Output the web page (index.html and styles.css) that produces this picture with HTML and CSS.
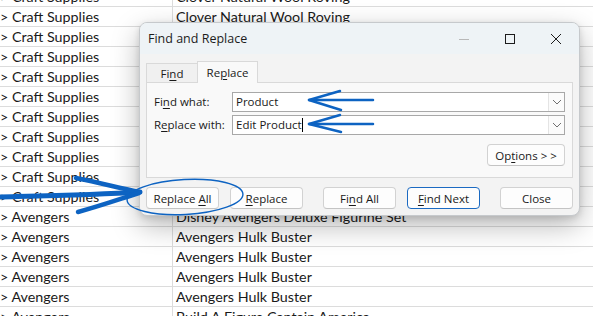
FILE: index.html
```html
<!DOCTYPE html>
<html>
<head>
<meta charset="utf-8">
<link rel="stylesheet" href="styles.css">
</head>
<body>
<div class="sheet">
  <div class="row"><div class="ca">&gt; Craft Supplies</div><div class="cb">Clover Natural Wool Roving</div></div>
  <div class="row"><div class="ca">&gt; Craft Supplies</div><div class="cb">Clover Natural Wool Roving</div></div>
  <div class="row"><div class="ca">&gt; Craft Supplies</div><div class="cb">Clover Natural Wool Roving</div></div>
  <div class="row"><div class="ca">&gt; Craft Supplies</div><div class="cb">Clover Natural Wool Roving</div></div>
  <div class="row"><div class="ca">&gt; Craft Supplies</div><div class="cb">Clover Natural Wool Roving</div></div>
  <div class="row"><div class="ca">&gt; Craft Supplies</div><div class="cb">Clover Natural Wool Roving</div></div>
  <div class="row"><div class="ca">&gt; Craft Supplies</div><div class="cb">Clover Natural Wool Roving</div></div>
  <div class="row"><div class="ca">&gt; Craft Supplies</div><div class="cb">Clover Natural Wool Roving</div></div>
  <div class="row"><div class="ca">&gt; Craft Supplies</div><div class="cb">Clover Natural Wool Roving</div></div>
  <div class="row"><div class="ca">&gt; Craft Supplies</div><div class="cb">Clover Natural Wool Roving</div></div>
  <div class="row"><div class="ca">&gt; Craft Supplies</div><div class="cb">Clover Natural Wool Roving</div></div>
  <div class="row"><div class="ca">&gt; Avengers</div><div class="cb">Disney Avengers Deluxe Figurine Set</div></div>
  <div class="row"><div class="ca">&gt; Avengers</div><div class="cb">Avengers Hulk Buster</div></div>
  <div class="row"><div class="ca">&gt; Avengers</div><div class="cb">Avengers Hulk Buster</div></div>
  <div class="row"><div class="ca">&gt; Avengers</div><div class="cb">Avengers Hulk Buster</div></div>
  <div class="row"><div class="ca">&gt; Avengers</div><div class="cb">Avengers Hulk Buster</div></div>
  <div class="row"><div class="ca">&gt; Avengers</div><div class="cb">Build A Figure Captain America</div></div>
</div>

<div class="dialog">
  <div class="titlebar">
    <span class="title">Find and Replace</span>
    <div class="winbtns">
      <span class="wb"><svg width="12" height="12" viewBox="0 0 12 12"><path d="M1 6.5H11" stroke="#b8b8b8" stroke-width="1"/></svg></span>
      <span class="wb"><svg width="12" height="12" viewBox="0 0 12 12"><rect x="1.5" y="1.5" width="9" height="9" fill="none" stroke="#1c1c1c" stroke-width="1"/></svg></span>
      <span class="wb"><svg width="12" height="12" viewBox="0 0 12 12"><path d="M1 1L11 11M11 1L1 11" stroke="#1c1c1c" stroke-width="1"/></svg></span>
    </div>
  </div>
  <div class="body">
    <div class="tabs">
      <div class="tab">Fi<u>n</u>d</div>
      <div class="tab active">Re<u>p</u>lace</div>
    </div>
    <div class="panel">
      <div class="field">
        <label class="lbl">Fi<u>n</u>d what:</label>
        <div class="combo"><span class="val">Product</span><span class="dd"><svg width="10" height="6" viewBox="0 0 10 6"><path d="M1 1L5 5L9 1" fill="none" stroke="#707070" stroke-width="1"/></svg></span></div>
      </div>
      <div class="field">
        <label class="lbl">R<u>e</u>place with:</label>
        <div class="combo"><span class="val">Edit Product<span class="caret"></span></span><span class="dd"><svg width="10" height="6" viewBox="0 0 10 6"><path d="M1 1L5 5L9 1" fill="none" stroke="#707070" stroke-width="1"/></svg></span></div>
      </div>
      <div class="optrow"><button class="btn opt">Op<u>t</u>ions &gt; &gt;</button></div>
    </div>
    <div class="btnrow">
      <button class="btn">Replace <u>A</u>ll</button>
      <button class="btn"><u>R</u>eplace</button>
      <button class="btn gap">Fi<u>n</u>d All</button>
      <button class="btn primary"><u>F</u>ind Next</button>
      <button class="btn gap">Close</button>
    </div>
  </div>
</div>

<svg class="ann" width="593" height="316" viewBox="0 0 593 316">
  <g fill="none" stroke="#0d63c2" stroke-linecap="round" stroke-linejoin="round">
    <path d="M373 100 C350 100 330 100 309 100" stroke-width="2.5"/>
    <path d="M340 91 L309 100 L341 110" stroke-width="2.5"/>
    <path d="M373 124 C350 124 330 124 309 124" stroke-width="2.5"/>
    <path d="M340 115 L309 124 L341 132" stroke-width="2.5"/>
    <path d="M0 197 C40 196 95 195 140 192" stroke-width="5"/>
    <path d="M76 178 C100 183 120 188 139 192" stroke-width="4.5"/>
    <path d="M78 212 C100 206 120 199 139 193" stroke-width="4.5"/>
    <ellipse cx="185" cy="197" rx="58" ry="17.5" stroke-width="1.4" transform="rotate(-3 185 197)"/>
  </g>
</svg>
</body>
</html>
```

FILE: styles.css
```css
* { box-sizing: border-box; }
html, body { margin: 0; padding: 0; }
body {
  width: 593px;
  height: 316px;
  overflow: hidden;
  position: relative;
  background: #fff;
  font-family: "Open Sans", "Noto Sans", sans-serif;
}
.sheet {
  margin-top: -13px;
  display: flex;
  flex-direction: column;
}
.row {
  display: flex;
  height: 20px;
  border-bottom: 1px solid #dcdcdc;
  font-family: "Lato", "Noto Sans", sans-serif;
  font-size: 14.3px;
  color: #1a1a1a;
  line-height: 19px;
}
.ca {
  width: 173px;
  border-right: 1px solid #dcdcdc;
  padding-left: 0;
  white-space: nowrap;
  overflow: hidden;
}
.cb {
  flex: 1;
  padding-left: 3px;
  white-space: nowrap;
}

.dialog {
  position: absolute;
  left: 139px;
  top: 22px;
  width: 441px;
  height: 194px;
  background: #f3f3f3;
  border: 1px solid #c6c9cc;
  border-radius: 8px;
  box-shadow: 0 10px 28px rgba(0,0,0,0.28), 0 2px 6px rgba(0,0,0,0.12);
  overflow: hidden;
  font-size: 11.5px;
  color: #1a1a1a;
  display: flex;
  flex-direction: column;
}
.titlebar {
  height: 31px;
  background: #eef3f6;
  display: flex;
  align-items: center;
  justify-content: space-between;
  padding-left: 8px;
}
.title { font-size: 12.5px; color: #1c1c1c; }
.winbtns { display: flex; height: 100%; }
.wb {
  width: 46px;
  display: flex;
  align-items: center;
  justify-content: center;
}
.body {
  flex: 1;
  padding: 7px 6px 0 6px;
  display: flex;
  flex-direction: column;
}
.tabs {
  display: flex;
  align-items: flex-end;
  height: 21px;
}
.tab {
  height: 19px;
  width: 52px;
  border: 1px solid #d9d9d9;
  border-bottom: none;
  background: #f0f0f0;
  display: flex;
  align-items: center;
  justify-content: center;
}
.tab.active {
  width: 61px;
  background: #f9f9f9;
  margin-left: -1px;
  position: relative;
  margin-bottom: -1px;
  height: 22px;
  z-index: 1;
}
.panel {
  height: 96px;
  background: #f9f9f9;
  border: 1px solid #d9d9d9;
  padding: 9px 7px 0 7px;
  display: flex;
  flex-direction: column;
  gap: 4px;
}
.field {
  display: flex;
  align-items: center;
  height: 19px;
}
.lbl { width: 78px; }
.combo {
  flex: 1;
  height: 20px;
  background: #fff;
  border: 1px solid #a8a8a8;
  display: flex;
  align-items: center;
  justify-content: space-between;
  padding: 0 0 0 3px;
}
.val { display: flex; align-items: center; white-space: pre; }
.caret {
  display: inline-block;
  width: 1px;
  height: 14px;
  background: #000;
}
.dd {
  width: 16px;
  height: 18px;
  border-left: 1px solid #e4e4e4;
  background: #fbfbfb;
  display: flex;
  align-items: center;
  justify-content: center;
}
.optrow {
  display: flex;
  justify-content: flex-end;
  margin-top: 6px;
}
.btn {
  font-family: inherit;
  font-size: 11.5px;
  color: #1a1a1a;
  height: 22px;
  width: 73px;
  background: #fdfdfd;
  border: 1px solid #d2d2d2;
  border-bottom-color: #c4c4c4;
  border-radius: 4px;
  padding: 0;
  text-align: center;
  white-space: pre;
}
.btn.opt { width: 78px; }
.btn.primary { border-color: #1b6ac2; }
.btnrow {
  display: flex;
  gap: 11px;
  margin-top: 9px;
}
.btnrow .gap { margin-left: 9px; }
u { text-decoration-thickness: 1px; text-underline-offset: 2px; }
.ann {
  position: absolute;
  left: 0;
  top: 0;
  pointer-events: none;
}
```
